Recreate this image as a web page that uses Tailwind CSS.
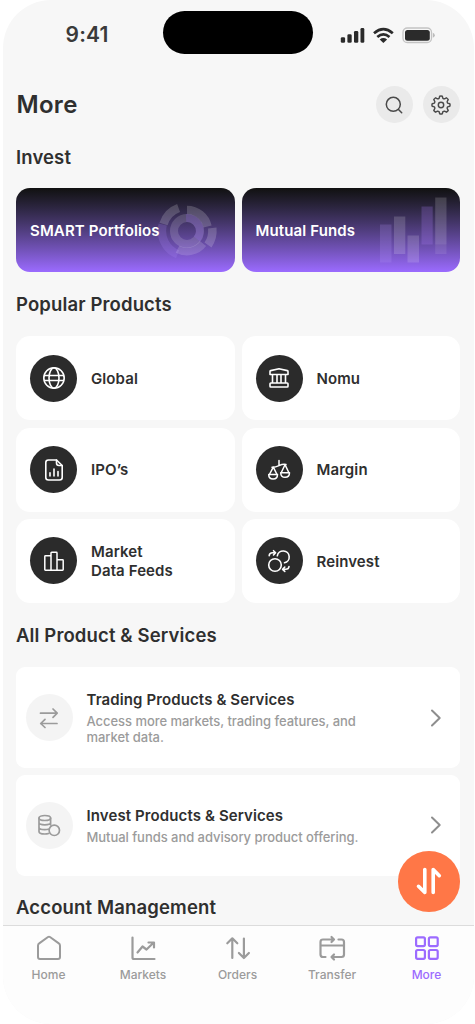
<!DOCTYPE html>
<html lang="en">
<head>
<meta charset="utf-8">
<title>More</title>
<script src="https://cdn.jsdelivr.net/npm/@tailwindcss/browser@4"></script>
</head>
<body class="bg-white font-['Inter',sans-serif] text-[#2f2f2f]">
<main class="relative ml-[3px] flex h-[1024px] w-[470.5px] flex-col overflow-hidden rounded-[48px] bg-[#f7f7f7]">
  <!-- Status bar -->
  <header class="flex h-[72px] shrink-0 items-start pl-[62.5px]">
    <span class="mt-[21px] w-[97.5px] text-[21px] leading-[28px] font-semibold tracking-[0.2px] text-[#3a3a3a]">9:41</span>
    <div class="mt-[11px] h-[43px] w-[150px] rounded-full bg-black"></div>
    <svg class="mt-[26px] ml-[27px]" width="96" height="18" viewBox="0 0 96 18" fill="none">
      <g fill="#2b2b2b"><rect x="0.800" y="11.300" width="4.300" height="5.500" rx="1.300"/><rect x="7.400" y="8.300" width="4.300" height="8.500" rx="1.300"/><rect x="14" y="5" width="4.300" height="11.800" rx="1.300"/><rect x="20.500" y="2" width="3.800" height="14.800" rx="1.300"/></g>
      <g stroke="#2b2b2b" stroke-width="2.700"><path d="M34 7.300Q43.400-.9 52.800 7.300"/><path d="M37.300 11Q43.400 5.700 49.500 11"/></g>
      <path d="M39.700 13.500Q43.400 10.700 47.100 13.500L43.400 17Z" fill="#2b2b2b"/>
      <rect x="63" y="2" width="28.500" height="14.500" rx="4.300" stroke="#c4c4c4" stroke-width="1.300"/>
      <rect x="65" y="3.900" width="24.800" height="10.800" rx="2.500" fill="#2b2b2b"/>
      <path d="M92.800 6.800q2 .8 2 2.500t-2 2.500z" fill="#bbb"/>
    </svg>
  </header>

  <div class="flex h-[65px] shrink-0 items-center pr-[13.500px] pl-[13.500px]">
    <h1 class="flex-1 text-[24px] leading-[30px] font-semibold tracking-[0.3px]">More</h1>
    <div class="flex gap-[9.500px]">
      <button class="flex size-[37.500px] items-center justify-center rounded-full bg-[#eaeaea]">
        <svg width="20" height="20" viewBox="0 0 20 20" fill="none" stroke="#4a4a4a" stroke-width="1.500" stroke-linecap="round"><circle cx="9.300" cy="9.300" r="7"/><path d="M14.500 14.500L17.700 17.700"/></svg>
      </button>
      <button class="flex size-[37.500px] items-center justify-center rounded-full bg-[#eaeaea]">
        <svg width="20" height="20" viewBox="0 0 20 20" fill="none" stroke="#4a4a4a" stroke-width="1.450" stroke-linejoin="round"><circle cx="10" cy="10" r="2.700"/><path d="M8.700 1.200Q10 .7 11.300 1.200L11.900 3.400Q12.700 3.900 13.500 3.800L15.400 2.800Q16.600 3.400 17.200 4.600L16.200 6.500Q16.100 7.300 16.600 8.100L18.800 8.700Q19.300 10 18.800 11.300L16.600 11.900Q16.100 12.700 16.200 13.500L17.200 15.400Q16.600 16.600 15.400 17.200L13.500 16.200Q12.700 16.100 11.900 16.600L11.300 18.800Q10 19.300 8.700 18.800L8.100 16.600Q7.300 16.100 6.500 16.200L4.600 17.200Q3.400 16.600 2.800 15.400L3.800 13.500Q3.900 12.700 3.400 11.900L1.200 11.300Q.7 10 1.200 8.700L3.400 8.100Q3.900 7.300 3.800 6.500L2.800 4.600Q3.400 3.400 4.600 2.800L6.500 3.800Q7.300 3.900 8.100 3.400Z"/></svg>
      </button>
    </div>
  </div>

  <div class="flex flex-col pr-[13.500px] pl-[13px]">
    <h2 class="mt-[8px] text-[18.500px] leading-[24px] font-semibold tracking-[0.130px]">Invest</h2>
    <div class="mt-[19.400px] grid grid-cols-2 gap-[7px] text-[15px] font-semibold tracking-[0.130px] text-white">
      <a class="relative flex h-[84px] items-center rounded-[14px] bg-linear-to-b from-[#111] to-[#9b6bff] pt-px pl-[14px]">
        <svg class="absolute top-[13.600px] left-[142px]" width="60" height="60" viewBox="0 0 60 60" fill="none" stroke="#fff">
          <circle cx="29" cy="29" r="13" stroke-width="8" stroke-opacity=".15"/>
          <g stroke-width="8.500" stroke-opacity=".18"><path d="M5.500 22A24.600 24.600 0 0 1 20.600 5.900"/><path d="M29 8A21 21 0 0 1 49.500 24.500"/><path d="M54.300 26A25.500 25.500 0 0 1 50 43"/></g>
          <path d="M4.800 22.500A25 25 0 0 0 19.600 52.200" stroke="#b08aff" stroke-opacity=".2" stroke-width="8.500"/>
          <path d="M28 16A13 13 0 0 1 39 37" stroke="#9b6bff" stroke-opacity=".2" stroke-width="8"/>
          <path d="M45 41.500A20.500 20.500 0 0 1 19.500 47.200" stroke-opacity=".15" stroke-width="8"/>
        </svg>
        <span class="relative">SMART Portfolios</span>
      </a>
      <a class="relative flex h-[84px] items-center rounded-[14px] bg-linear-to-b from-[#111] to-[#9b6bff] pt-px pl-[14px]">
        <svg class="absolute top-[9px] left-[138px]" width="67" height="67" viewBox="0 0 67 67" fill="#fff">
          <rect x="0" y="27.500" width="11.500" height="38" fill="#b99aff" fill-opacity=".2"/><rect x="14" y="19.500" width="11.300" height="37.500" fill-opacity=".16"/><rect x="27.500" y="38.500" width="11.500" height="27" fill-opacity=".15"/><rect x="41.500" y="9.500" width="11.200" height="38" fill="#b083ff" fill-opacity=".23"/><rect x="55.200" y=".5" width="11.300" height="47" fill-opacity=".16"/><rect x="55.200" y="47.500" width="11.300" height="9.500" fill-opacity=".09"/>
        </svg>
        <span class="relative">Mutual Funds</span>
      </a>
    </div>

    <h2 class="mt-[20px] text-[18.500px] leading-[24px] font-semibold tracking-[0.130px]">Popular Products</h2>
    <div class="mt-[20px] grid auto-rows-[84px] grid-cols-2 gap-x-[7px] gap-y-[7.250px] text-[15px] leading-[19px] font-semibold tracking-[0.100px]">
      <a class="flex items-center gap-[14px] rounded-[14px] bg-white pl-[14px]">
        <span class="flex size-[47px] items-center justify-center rounded-full bg-[#2b2b2b]"><svg width="24" height="24" viewBox="0 0 24 24" fill="none" stroke="#fff" stroke-width="1.600"><circle cx="12" cy="12" r="10.200"/><ellipse cx="12" cy="12" rx="5" ry="10.200"/><path d="M3 9.500H21M3 14.500H21"/></svg></span>
        <span>Global</span>
      </a>
      <a class="flex items-center gap-[14px] rounded-[14px] bg-white pl-[14px]">
        <span class="flex size-[47px] items-center justify-center rounded-full bg-[#2b2b2b]"><svg width="24" height="24" viewBox="0 0 24 24" fill="none" stroke="#fff" stroke-width="1.600" stroke-linejoin="round"><path d="M3 5.500Q3 4.800 3.700 4.600L12 2.800L20.300 4.600Q21 4.800 21 5.500V8.500H3Z"/><path d="M5.500 8.500V17M10 8.500V17M14 8.500V17M18.500 8.500V17"/><rect x="3" y="17" width="18" height="4" rx=".8"/></svg></span>
        <span>Nomu</span>
      </a>
      <a class="flex items-center gap-[14px] rounded-[14px] bg-white pl-[14px]">
        <span class="flex size-[47px] items-center justify-center rounded-full bg-[#2b2b2b]"><svg width="24" height="24" viewBox="0 0 24 24" fill="none" stroke="#fff" stroke-width="1.600" stroke-linecap="round" stroke-linejoin="round"><path d="M14.500 2H6.500Q3.800 2 3.800 4.500V19.500Q3.800 22 6.500 22H17.500Q20.200 22 20.200 19.500V7.500Z"/><path d="M14.500 2V5Q14.500 7.500 17 7.500H20.200"/><path d="M8 14.700V18M12 11V18M16 13.500V18"/></svg></span>
        <span>IPO’s</span>
      </a>
      <a class="flex items-center gap-[14px] rounded-[14px] bg-white pl-[14px]">
        <span class="flex size-[47px] items-center justify-center rounded-full bg-[#2b2b2b]"><svg width="24" height="24" viewBox="0 0 24 24" fill="none" stroke="#fff" stroke-width="1.500" stroke-linecap="round" stroke-linejoin="round"><path d="M12 2.500V7M5 9.200Q8 9.400 12 7.600T19 6.500"/><path d="M6.300 9.200L2.400 16.500M6.300 9.200L10 16.500M18 6.700L14.300 14.500M18 6.700L21.800 14.500"/><path d="M1.700 16.500H10.500C10.500 19.500 8.800 21 6.100 21S1.700 19.500 1.700 16.500ZM13.700 14.800H22.500C22.500 17.800 20.800 19.300 18.100 19.300S13.700 17.800 13.700 14.800Z"/></svg></span>
        <span>Margin</span>
      </a>
      <a class="flex items-center gap-[14px] rounded-[14px] bg-white pl-[14px]">
        <span class="flex size-[47px] items-center justify-center rounded-full bg-[#2b2b2b]"><svg width="24" height="24" viewBox="0 0 24 24" fill="none" stroke="#fff" stroke-width="1.500" stroke-linejoin="round"><path d="M9 21.200H3.500Q2.800 21.200 2.800 20.500V7.500Q2.800 6.800 3.500 6.800H9M9 21.200V4Q9 3.300 9.700 3.300H14.300Q15 3.300 15 4V21.200ZM15 10.800H20.500Q21.200 10.800 21.200 11.500V20.500Q21.200 21.200 20.500 21.200H15"/></svg></span>
        <span class="pt-px">Market<br>Data Feeds</span>
      </a>
      <a class="flex items-center gap-[14px] rounded-[14px] bg-white pl-[14px]">
        <span class="flex size-[47px] items-center justify-center rounded-full bg-[#2b2b2b]"><svg width="24" height="24" viewBox="0 0 24 24" fill="none" stroke="#fff" stroke-width="1.600" stroke-linecap="round" stroke-linejoin="round"><circle cx="8" cy="16" r="6.300"/><path d="M10.300 6.800A6 6 0 1 1 17.500 13.800"/><path d="M2.200 6.800Q2.400 3.800 5.500 3.800H8.300M6.500 1.700L8.600 3.800L6.500 6"/><path d="M22 17.500Q21.800 20.300 18.800 20.300H15.800M17.800 18L15.600 20.300L17.800 22.400"/></svg></span>
        <span class="pt-px">Reinvest</span>
      </a>
    </div>

    <h2 class="mt-[20px] text-[18.500px] leading-[24px] font-semibold tracking-[0.130px]">All Product &amp; Services</h2>
    <div class="mt-[20.200px] flex flex-col gap-[7px]">
      <a class="flex h-[101px] items-center rounded-[9px] bg-white pr-[18px] pl-[9.500px]">
        <span class="flex size-[47px] shrink-0 items-center justify-center rounded-full bg-[#f4f4f4]"><svg width="24" height="24" viewBox="0 0 24 24" fill="none" stroke="#9b9b9b" stroke-width="1.700" stroke-linecap="round" stroke-linejoin="round"><path d="M3.500 7.200H20M16 3L20.200 7.200L16 11.300M20 17.500H3.700M8 13.300L3.700 17.500L8 21.500"/></svg></span>
        <span class="ml-[14px] flex-1">
          <span class="block text-[15px] leading-[20px] font-semibold tracking-[0.110px]">Trading Products &amp; Services</span>
          <span class="mt-[3px] block text-[13px] leading-[16px] font-medium tracking-[-0.045px] text-[#9b9b9b]">Access more markets, trading features, and<br>market data.</span>
        </span>
        <svg width="12" height="20" viewBox="0 0 12 20" fill="none" stroke="#8e8e8e" stroke-width="2" stroke-linecap="round" stroke-linejoin="round"><path d="M2 2.500L9.700 10L2 17.500"/></svg>
      </a>
      <a class="flex h-[100.500px] items-center rounded-[9px] bg-white pr-[18px] pl-[9.500px]">
        <span class="flex size-[47px] shrink-0 items-center justify-center rounded-full bg-[#f4f4f4]"><svg width="24" height="24" viewBox="0 0 24 24" fill="none" stroke="#9b9b9b" stroke-width="1.700" stroke-linecap="round" stroke-linejoin="round"><ellipse cx="7.800" cy="5" rx="5.800" ry="2.500"/><path d="M2 5V18.500Q2 21 7.800 21Q10 21 11.500 20.500M13.600 5V12M2 9.600Q2 11.900 7.800 11.900T13.600 9.600M2 14.200Q2 16.600 7.800 16.600Q10 16.600 11.300 16.200"/><circle cx="17.300" cy="17.300" r="5.200"/></svg></span>
        <span class="ml-[14px] flex-1">
          <span class="block text-[15px] leading-[20px] font-semibold tracking-[0.110px]">Invest Products &amp; Services</span>
          <span class="mt-[3px] block text-[13px] leading-[16px] font-medium tracking-[-0.045px] text-[#9b9b9b]">Mutual funds and advisory product offering.</span>
        </span>
        <svg width="12" height="20" viewBox="0 0 12 20" fill="none" stroke="#8e8e8e" stroke-width="2" stroke-linecap="round" stroke-linejoin="round"><path d="M2 2.500L9.700 10L2 17.500"/></svg>
      </a>
    </div>
    <h2 class="mt-[19.500px] text-[18.500px] leading-[24px] font-semibold tracking-[0.150px]">Account Management</h2>
  </div>

  <!-- Tab bar -->
  <nav class="mt-auto grid h-[99px] shrink-0 grid-cols-[91px_98px_91px_98px_91px] border-t border-[#dcdcdc] bg-[#fdfdfd] pt-[8px] text-[12px] leading-[16px] font-medium text-[#9b9b9b]">
    <a class="flex flex-col items-center gap-[5px]"><svg width="28" height="28" viewBox="0 0 28 28" fill="none" stroke="currentColor" stroke-width="2" stroke-linejoin="round"><path d="M13 3Q14 2.300 15 3L23.800 9.400Q25 10.200 25 11.700V23Q25 25 23 25H5Q3 25 3 23V11.700Q3 10.200 4.200 9.400Z"/></svg>Home</a>
    <a class="flex flex-col items-center gap-[5px]"><svg width="28" height="28" viewBox="0 0 28 28" fill="none" stroke="currentColor" stroke-width="2.200" stroke-linecap="round" stroke-linejoin="round"><path d="M3.500 3.500V23.500Q3.500 25 5 25H25.500M8.500 18.500L13.500 12.500L17.500 15.500L24.500 8.800M19.500 8.500H25V13.500"/></svg>Markets</a>
    <a class="flex flex-col items-center gap-[5px]"><svg width="28" height="28" viewBox="0 0 28 28" fill="none" stroke="currentColor" stroke-width="2.200" stroke-linecap="round" stroke-linejoin="round"><path d="M8.300 24V4.500M3.300 9.300L8.300 4.300L13.300 9.300M19.900 4.500V23.800M14.900 19L19.900 24L24.900 19"/></svg>Orders</a>
    <a class="flex flex-col items-center gap-[5px]"><svg width="28" height="28" viewBox="0 0 28 28" fill="none" stroke="currentColor" stroke-width="2.200" stroke-linecap="round" stroke-linejoin="round"><path d="M7.500 23H5Q2.500 23 2.500 20.500V8Q2.500 5.500 5 5.500H15.500M13.500 3L16 5.500L13.500 8M20.500 5.500H23.500Q26 5.500 26 8V20.500Q26 23 23.500 23H13.500M16 20.500L13.500 23L16 25.500M2.500 11.500H26"/></svg>Transfer</a>
    <a class="flex flex-col items-center gap-[5px] text-[#9c6bff]"><svg width="28" height="28" viewBox="0 0 28 28" fill="none" stroke="currentColor" stroke-width="2.200"><rect x="3.100" y="3.300" width="8.800" height="8.800" rx="1.500"/><rect x="15.900" y="3.300" width="8.800" height="8.800" rx="1.500"/><rect x="3.100" y="16" width="8.800" height="8.800" rx="1.500"/><rect x="15.900" y="16" width="8.800" height="8.800" rx="1.500"/></svg>More</a>
  </nav>

  <!-- Floating trade button -->
  <button class="absolute top-[851px] left-[394.700px] flex h-[60.500px] w-[62.500px] items-center justify-center rounded-[50%] bg-[#ff7747]">
    <svg width="28" height="30" viewBox="0 0 28 30" fill="none" stroke="#fff" stroke-width="3.600" stroke-linecap="round" stroke-linejoin="round"><path d="M9.800 3.500V26.500L3.500 20.300M18.200 26.500V3.500L24.300 9.700"/></svg>
  </button>
</main>
</body>
</html>
